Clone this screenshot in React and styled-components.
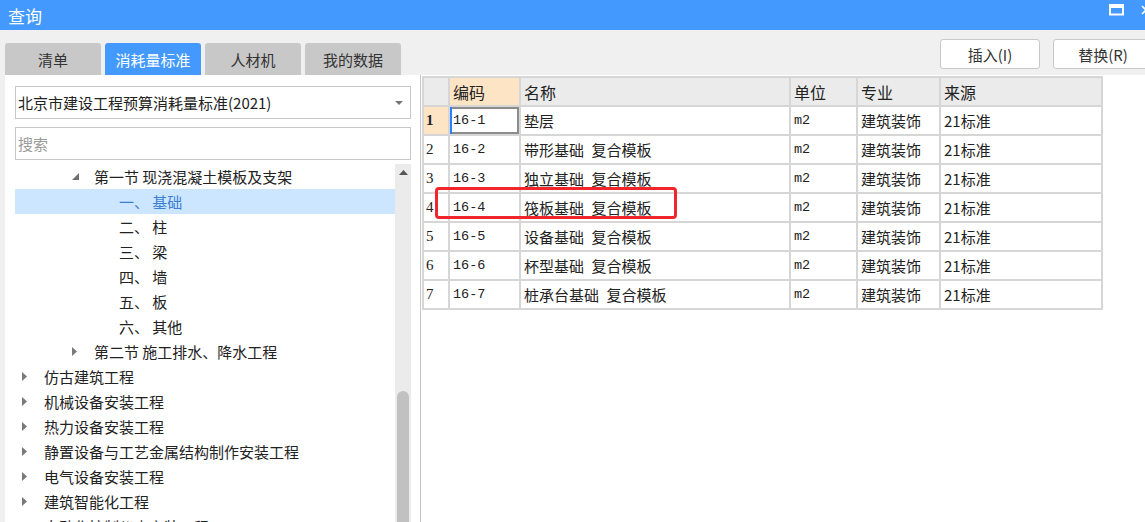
import React from 'react';
import styled, { createGlobalStyle } from 'styled-components';

const Global = createGlobalStyle`
  html, body { margin: 0; padding: 0; }
  body {
    width: 1145px;
    height: 522px;
    overflow: hidden;
    background: #f0f0f0;
    font-family: "Noto Sans CJK SC", "Noto Sans", sans-serif;
    color: #222;
  }
`;

const Window = styled.div`
  display: flex;
  flex-direction: column;
  width: 1145px;
  height: 522px;
  overflow: hidden;
  background: #f0f0f0;
`;

const TitleBar = styled.div`
  flex: 0 0 30px;
  display: flex;
  align-items: center;
  justify-content: space-between;
  padding-left: 8px;
  background: #4499ff;
  color: #fff;
  font-size: 17px;
`;

const TitleIcons = styled.div`
  display: flex;
  align-items: center;
  gap: 17px;
  margin-right: -6px;
  padding-bottom: 10px;
`;

const Toolbar = styled.div`
  flex: 0 0 45px;
  display: flex;
  justify-content: space-between;
  padding-left: 5px;
`;

const Tabs = styled.div`
  display: flex;
  align-items: flex-end;
  gap: 4px;
`;

const Tab = styled.div`
  width: 96px;
  height: 32px;
  display: flex;
  align-items: center;
  justify-content: center;
  border-radius: 3px 3px 0 0;
  font-size: 15px;
  background: ${p => (p.$active ? '#4499ff' : '#c8c8c8')};
  color: ${p => (p.$active ? '#fff' : '#333')};
`;

const Actions = styled.div`
  display: flex;
  gap: 13px;
  padding-top: 9px;
  margin-right: -8px;
`;

const Button = styled.div`
  width: 98px;
  height: 28px;
  display: flex;
  align-items: center;
  justify-content: center;
  background: #fff;
  border: 1px solid #c9c9c9;
  border-radius: 3px;
  font-size: 15px;
  color: #333;
`;

const Content = styled.div`
  flex: 1;
  display: flex;
  min-height: 0;
`;

const LeftPane = styled.div`
  width: 405px;
  margin-left: 5px;
  padding: 11px 0 0 10px;
  background: #fff;
  border-right: 1px solid #c8c8c8;
  display: flex;
  flex-direction: column;
  gap: 8px;
`;

const Field = styled.div`
  width: 396px;
  height: 33px;
  box-sizing: border-box;
  border: 1px solid #c8c8c8;
  display: flex;
  align-items: center;
  justify-content: space-between;
  padding: 0 7px 0 2px;
  font-size: 15px;
  color: ${p => (p.$placeholder ? '#9a9a9a' : '#222')};
`;

const TreeArea = styled.div`
  flex: 1;
  display: flex;
  min-height: 0;
  margin-top: -4px;
`;

const TreeList = styled.div`
  width: 380px;
  display: flex;
  flex-direction: column;
`;

const TreeRow = styled.div`
  height: 25px;
  flex: 0 0 25px;
  display: flex;
  align-items: center;
  padding-left: ${p => p.$indent}px;
  font-size: 15px;
  white-space: pre;
  background: ${p => (p.$selected ? '#cce6ff' : 'transparent')};
  color: ${p => (p.$selected ? '#3b7fd4' : '#222')};
`;

const Arrow = styled.span`
  width: 29px;
  flex: 0 0 29px;
  display: flex;
  align-items: center;
  padding-left: 7px;
  box-sizing: border-box;
`;

const ScrollTrack = styled.div`
  width: 16px;
  background: #ebebeb;
  display: flex;
  flex-direction: column;
  align-items: center;
`;

const ScrollUp = styled.div`
  height: 16px;
  display: flex;
  align-items: center;
`;

const ScrollThumb = styled.div`
  width: 12px;
  margin-top: 211px;
  flex: 1;
  background: #c1c1c1;
  border-radius: 6px 6px 0 0;
`;

const RightPane = styled.div`
  flex: 1;
  background: #fff;
  padding: 1px 0 0 1px;
`;

const GridWrap = styled.div`
  position: relative;
  display: inline-block;
`;

const Grid = styled.div`
  display: grid;
  grid-template-columns: 24px 69px 268px 65px 81px 160px;
  grid-template-rows: 27px;
  grid-auto-rows: 27px;
  gap: 2px;
  padding: 2px;
  background: #d6d6d6;
`;

const HeadCell = styled.div`
  display: flex;
  align-items: center;
  padding-left: 3px;
  font-size: 16px;
  color: #222;
  background: ${p => (p.$active ? '#fde4c4' : '#ebebeb')};
`;

const Cell = styled.div`
  display: flex;
  align-items: center;
  padding-left: 3px;
  font-size: 15px;
  color: #222;
  background: #fff;
  white-space: pre;
  ${p => p.$focus && 'box-shadow: inset 2px 0 0 #2a7fff, inset 0 0 0 2px #8c8c8c;'}
`;

const NumCell = styled(Cell)`
  font-family: "Liberation Serif", serif;
  font-weight: ${p => (p.$current ? 700 : 400)};
  background: ${p => (p.$current ? '#fde4c4' : '#fff')};
  padding-left: 2px;
`;

const MonoText = styled.span`
  font-family: "Liberation Mono", monospace;
  font-size: 13.5px;
`;

const Highlight = styled.div`
  position: absolute;
  left: 13px;
  top: 111px;
  width: 236px;
  height: 26px;
  border: 3px solid #f0262a;
  border-radius: 4px;
  pointer-events: none;
`;

const Expanded = () => (
  <svg width="7" height="7" viewBox="0 0 7 7"><path d="M7 0V7H0Z" fill="#6f6f6f" /></svg>
);

const Collapsed = () => (
  <svg width="5" height="9" viewBox="0 0 5 9"><path d="M0 0L5 4.5L0 9Z" fill="#7a7a7a" /></svg>
);

const tree = [
  { indent: 50, arrow: 'open', text: '第一节 现浇混凝土模板及支架' },
  { indent: 104, text: '一、 基础', selected: true },
  { indent: 104, text: '二、 柱' },
  { indent: 104, text: '三、 梁' },
  { indent: 104, text: '四、 墙' },
  { indent: 104, text: '五、 板' },
  { indent: 104, text: '六、 其他' },
  { indent: 50, arrow: 'closed', text: '第二节 施工排水、降水工程' },
  { indent: 0, arrow: 'closed', text: '仿古建筑工程' },
  { indent: 0, arrow: 'closed', text: '机械设备安装工程' },
  { indent: 0, arrow: 'closed', text: '热力设备安装工程' },
  { indent: 0, arrow: 'closed', text: '静置设备与工艺金属结构制作安装工程' },
  { indent: 0, arrow: 'closed', text: '电气设备安装工程' },
  { indent: 0, arrow: 'closed', text: '建筑智能化工程' },
  { indent: 0, arrow: 'closed', text: '自动化控制仪表安装工程' },
];

const rows = [
  ['16-1', '垫层'],
  ['16-2', '带形基础\u2002复合模板'],
  ['16-3', '独立基础\u2002复合模板'],
  ['16-4', '筏板基础\u2002复合模板'],
  ['16-5', '设备基础\u2002复合模板'],
  ['16-6', '杯型基础\u2002复合模板'],
  ['16-7', '桩承台基础\u2002复合模板'],
];

export default function App() {
  return (
    <Window>
      <Global />
      <TitleBar>
        <span>查询</span>
        <TitleIcons>
          <svg width="15" height="12" viewBox="0 0 15 12">
            <rect x="1" y="1.5" width="13" height="9" fill="none" stroke="#fff" strokeWidth="2" />
            <rect x="0" y="0" width="15" height="4" fill="#fff" />
          </svg>
          <svg width="10" height="10" viewBox="0 0 10 10">
            <path d="M1 1L9 9M9 1L1 9" stroke="#fff" strokeWidth="1.6" />
          </svg>
        </TitleIcons>
      </TitleBar>

      <Toolbar>
        <Tabs>
          <Tab>清单</Tab>
          <Tab $active>消耗量标准</Tab>
          <Tab>人材机</Tab>
          <Tab>我的数据</Tab>
        </Tabs>
        <Actions>
          <Button>插入(I)</Button>
          <Button>替换(R)</Button>
        </Actions>
      </Toolbar>

      <Content>
        <LeftPane>
          <Field>
            <span>北京市建设工程预算消耗量标准(2021)</span>
            <svg width="8" height="4" viewBox="0 0 8 4"><path d="M0 0H8L4 4Z" fill="#777" /></svg>
          </Field>
          <Field $placeholder>搜索</Field>
          <TreeArea>
            <TreeList>
              {tree.map((item, i) => (
                <TreeRow key={i} $indent={item.indent} $selected={item.selected}>
                  {item.arrow && (
                    <Arrow>{item.arrow === 'open' ? <Expanded /> : <Collapsed />}</Arrow>
                  )}
                  {item.text}
                </TreeRow>
              ))}
            </TreeList>
            <ScrollTrack>
              <ScrollUp>
                <svg width="9" height="5" viewBox="0 0 9 5"><path d="M0 5L4.5 0L9 5Z" fill="#555" /></svg>
              </ScrollUp>
              <ScrollThumb />
            </ScrollTrack>
          </TreeArea>
        </LeftPane>

        <RightPane>
          <GridWrap>
            <Grid>
              <HeadCell />
              <HeadCell $active>编码</HeadCell>
              <HeadCell>名称</HeadCell>
              <HeadCell>单位</HeadCell>
              <HeadCell>专业</HeadCell>
              <HeadCell>来源</HeadCell>
              {rows.map(([code, name], i) => (
                <React.Fragment key={code}>
                  <NumCell $current={i === 0}>{i + 1}</NumCell>
                  <Cell $focus={i === 0}><MonoText>{code}</MonoText></Cell>
                  <Cell>{name}</Cell>
                  <Cell><MonoText>m2</MonoText></Cell>
                  <Cell>建筑装饰</Cell>
                  <Cell>21标准</Cell>
                </React.Fragment>
              ))}
            </Grid>
            <Highlight />
          </GridWrap>
        </RightPane>
      </Content>
    </Window>
  );
}
